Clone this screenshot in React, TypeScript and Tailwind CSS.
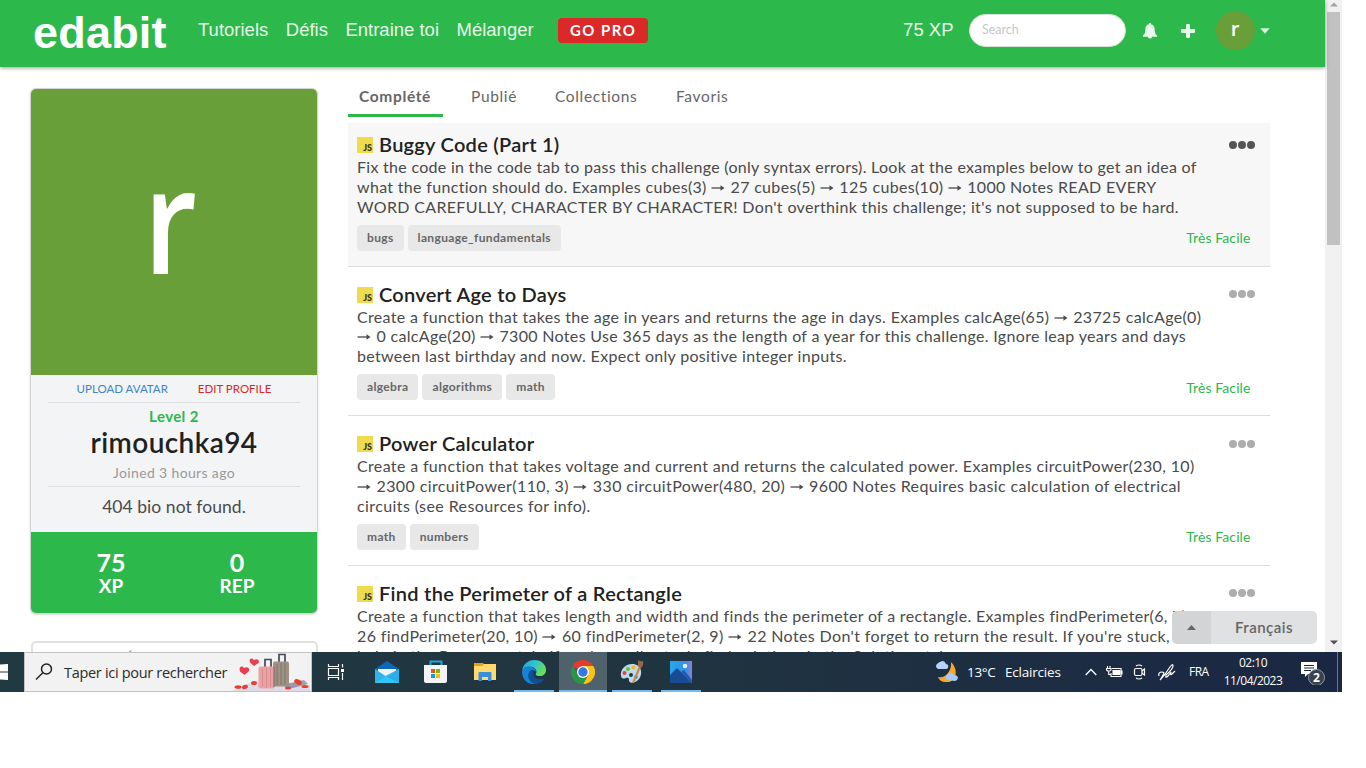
import React from "react";

const challenges = [
  {
    title: "Buggy Code (Part 1)",
    lines: [
      { track: "tracking-[0.285px]", text: "Fix the code in the code tab to pass this challenge (only syntax errors). Look at the examples below to get an idea of" },
      { track: "tracking-[0.32px]", text: "what the function should do. Examples cubes(3) ➞ 27 cubes(5) ➞ 125 cubes(10) ➞ 1000 Notes READ EVERY" },
      { track: "tracking-[0.34px]", text: "WORD CAREFULLY, CHARACTER BY CHARACTER! Don't overthink this challenge; it's not supposed to be hard." },
    ],
    tags: ["bugs", "language_fundamentals"],
  },
  {
    title: "Convert Age to Days",
    lines: [
      { track: "tracking-[0.33px]", text: "Create a function that takes the age in years and returns the age in days. Examples calcAge(65) ➞ 23725 calcAge(0)" },
      { track: "tracking-[0.325px]", text: "➞ 0 calcAge(20) ➞ 7300 Notes Use 365 days as the length of a year for this challenge. Ignore leap years and days" },
      { track: "tracking-[0.315px]", text: "between last birthday and now. Expect only positive integer inputs." },
    ],
    tags: ["algebra", "algorithms", "math"],
  },
  {
    title: "Power Calculator",
    lines: [
      { track: "tracking-[0.352px]", text: "Create a function that takes voltage and current and returns the calculated power. Examples circuitPower(230, 10)" },
      { track: "tracking-[0.39px]", text: "➞ 2300 circuitPower(110, 3) ➞ 330 circuitPower(480, 20) ➞ 9600 Notes Requires basic calculation of electrical" },
      { track: "tracking-[0.4px]", text: "circuits (see Resources for info)." },
    ],
    tags: ["math", "numbers"],
  },
  {
    title: "Find the Perimeter of a Rectangle",
    lines: [
      { track: "tracking-[0.32px]", text: "Create a function that takes length and width and finds the perimeter of a rectangle. Examples findPerimeter(6, 7) ➞" },
      { track: "tracking-[0.37px]", text: "26 findPerimeter(20, 10) ➞ 60 findPerimeter(2, 9) ➞ 22 Notes Don't forget to return the result. If you're stuck," },
      { track: "tracking-[0.3px]", text: "help in the Resources tab. If you're really stuck, find solutions in the Solutions tab." },
    ],
    tags: [],
  },
];

function Arrow() {
  return (
    <svg viewBox="0 0 14 8" className="mr-px inline-block h-2 w-3.5 align-[1px]" fill="none" stroke="#4a4a4a" strokeWidth="1.3">
      <path d="M.5 4H12" />
      <path d="M9.500 1.200 13.500 4 9.500 6.800Z" fill="#4a4a4a" stroke="none" />
    </svg>
  );
}

function Line({ text, track }: { text: string; track: string }) {
  return (
    <div className={`h-[19.9px] whitespace-pre ${track}`}>
      {text.split("➞").map((part, i) => (
        <React.Fragment key={i}>
          {i > 0 && <Arrow />}
          {part}
        </React.Fragment>
      ))}
    </div>
  );
}

function Header() {
  return (
    <header className="relative flex h-[67px] shrink-0 items-center bg-[#2db84b] pl-[33px] pr-[55px] font-['Liberation_Sans',sans-serif] text-lg text-white shadow-[0_1px_4px_rgba(0,0,0,0.4)]">
      <div className="w-[165px] pb-0.5 text-[45px] leading-[60px] font-bold tracking-[0.2px]">edabit</div>
      <nav className="flex h-6 items-center gap-[17.5px] pb-1.5 text-[18.5px] text-[#e6f7e9]">
        <span>Tutoriels</span>
        <span>Défis</span>
        <span>Entraine toi</span>
        <span>Mélanger</span>
      </nav>
      <div className="mb-1.5 ml-6 flex h-[25px] w-[90px] items-center justify-center rounded bg-[#db2828] pl-px font-[Lato,sans-serif] text-[15px] font-bold tracking-[1.5px]">
        GO PRO
      </div>
      <div className="ml-auto flex h-10 items-center pb-1.5">
        <span className="text-[18.5px] text-[#e6f7e9]">75 XP</span>
        <div className="ml-[15.5px] flex h-[33px] w-[157px] items-center rounded-full border border-[#d9e3da] bg-white px-3 pb-0.5 font-[Lato,sans-serif] text-[12.5px] text-[#c7c7c7]">
          Search
        </div>
        <svg viewBox="0 0 14 16" className="ml-[17px] h-4 w-3.5" fill="#e9f8ec">
          <path d="M7 0a1.1 1.1 0 0 0-1.1 1.2C3.2 1.8 2.3 4 2.3 6.4c0 3.2-.8 4.7-2.3 5.900V13.700H5a2 1.900 0 0 0 4 0h5V12.300c-1.500-1.200-2.300-2.700-2.300-5.900C11.700 4 10.800 1.800 8.100 1.200A1.100 1.100 0 0 0 7 0Z" />
        </svg>
        <svg viewBox="0 0 14 14" className="ml-6 h-3.5 w-3.5" fill="#e9f8ec">
          <path d="M6 0h2q1 0 1 1v4h4q1 0 1 1v2q0 1-1 1H9v4q0 1-1 1H6q-1 0-1-1V9H1Q0 9 0 8V6q0-1 1-1h4V1q0-1 1-1Z" />
        </svg>
        <div className="ml-[21px] flex h-[39px] w-[39px] items-center justify-center rounded-full bg-[#689f38] pr-px pb-[3px] font-['Open_Sans',sans-serif] text-[20px] leading-none font-semibold">
          r
        </div>
        <svg viewBox="0 0 10 6" className="ml-[5px] h-1.5 w-2.5" fill="#d9f1de">
          <path d="M.3.2h9.4L5 5.800Z" />
        </svg>
      </div>
    </header>
  );
}

function Profile() {
  return (
    <section className="h-[524px] w-[286px] shrink-0 overflow-hidden rounded-[5px] bg-[#f3f4f6] text-center shadow-[0_0_0_1px_#d4d4d5,0_1px_3px_rgba(0,0,0,0.3)]">
      <svg viewBox="0 0 286 286" className="block h-[286px] w-[286px] bg-[#689f38]">
        <text transform="translate(112.5 185) scale(.85 1)" fill="#fff" fontFamily="Open Sans" fontSize="146" fontWeight="600">r</text>
      </svg>
      <div className="mx-[17px] flex h-7 items-center justify-center gap-[30px] border-b border-[#dedede] text-[11.5px] leading-none text-[#db2828]">
        <span className="text-[#4183c4]">UPLOAD AVATAR</span>
        <span>EDIT PROFILE</span>
      </div>
      <div className="mx-[17px] h-[84px] border-b border-[#dedede] pt-[3px]">
        <div className="text-[15px] leading-5 font-bold tracking-[0.4px] text-[#2db84b]">Level 2</div>
        <div className="text-[28px] leading-8 font-semibold tracking-[0.4px] text-[#212121]">rimouchka94</div>
        <div className="pt-[5px] text-[14px] leading-5 tracking-[0.35px] text-[#999]">Joined 3 hours ago</div>
      </div>
      <div className="h-[45px] text-[17.5px] leading-[40px] tracking-[0.05px] text-[#4a4a4a]">404 bio not found.</div>
      <div className="flex h-[81px] justify-center bg-[#2db84b] pt-[17px] font-bold text-white">
        <div className="w-[126px]">
          <div className="text-[25px] leading-[27px]">75</div>
          <div className="text-[19px] leading-5">XP</div>
        </div>
        <div className="w-[126px]">
          <div className="text-[25px] leading-[27px]">0</div>
          <div className="text-[19px] leading-5">REP</div>
        </div>
      </div>
    </section>
  );
}

function Challenge({ item, active }: { item: (typeof challenges)[number]; active: boolean }) {
  return (
    <article className="h-[149.6px] shrink-0 text-[#4a4a4a]">
      <div className={`h-[143.5px] border-b border-[#ddd] pl-[9px] pt-2 pr-[15px] ${active ? "bg-[#f7f7f7]" : ""}`}>
        <div className="flex h-[26px] items-start">
          <div className="mt-1.5 flex h-4 w-4 items-end justify-end bg-[#f0db4f] pr-px text-[9px] leading-[11px] font-black text-[#323330]">JS</div>
          <h2 className="mt-px ml-1.5 text-[20px] leading-6 font-semibold tracking-[0.27px] whitespace-nowrap text-[#212121]">{item.title}</h2>
          <div className={`mt-[9.5px] ml-auto flex gap-px ${active ? "text-[#555]" : "text-[#adadad]"}`}>
            <i className="size-2 rounded-full bg-current" />
            <i className="size-2 rounded-full bg-current" />
            <i className="size-2 rounded-full bg-current" />
          </div>
        </div>
        <div className="text-[16px] leading-[20px]">
          {item.lines.map((l) => (
            <Line key={l.text} text={l.text} track={l.track} />
          ))}
        </div>
        {item.tags.length > 0 && (
          <div className="mt-2 flex h-[26px] items-center gap-1">
            {item.tags.map((t) => (
              <span key={t} className="h-[26px] rounded bg-[#e8e8e8] px-2.5 text-[12px] leading-[26px] font-bold tracking-[0.35px] text-[#666]">
                {t}
              </span>
            ))}
            <span className="ml-auto pr-[4.5px] text-[14px] tracking-[0.1px] text-[#2db84b]">Très Facile</span>
          </div>
        )}
      </div>
    </article>
  );
}

function Tabs() {
  return (
    <div className="flex h-9 text-[15.5px] leading-[30px] tracking-[0.65px] text-[#666]">
      <div className="w-[95px] border-b-[3px] border-[#2db84b] pl-[11px] font-bold">Complété</div>
      <div className="w-[84px] pl-7">Publié</div>
      <div className="w-[121px] pl-7">Collections</div>
      <div className="pl-7">Favoris</div>
    </div>
  );
}

function Suitcases() {
  return (
    <svg viewBox="0 0 80 38" className="-ml-0.5 h-[38px] w-20 shrink-0">
      <path d="M0 38Q20 25 45 28T78 32V38Z" fill="#dddbea" />
      <path d="M50 32 72 27 76 31 57 36Z" fill="#77758a" opacity=".65" />
      <path d="M47 12V1.500h6V12M33 17V6.500h6V15" fill="none" stroke="#46475c" strokeWidth="1.700" />
      <rect x="41" y="8.500" width="16" height="25" rx="2" fill="#9e9284" />
      <path d="M45 11v21M49 10v22M53 10v22" stroke="#82776c" />
      <rect x="26.500" y="13.500" width="16" height="22" rx="2" fill="#eaa3a3" />
      <path d="M30.500 16v18M34.500 15v20M38.500 15v19" stroke="#d98b91" />
      <path d="M42 14v20" stroke="#6e596b" />
      <path d="M12.500 22 8 18.500C6.500 14 9.500 12 12 15c3-2 6 0 5 3ZM22 13 18 9.500c-1.500-4 2-5.500 4-2.500 3-2 6 0 4.500 3Z" fill="#e93f50" />
      <g fill="#e93f2c">
        <ellipse cx="6" cy="34" rx="3.500" ry="1.800" /><ellipse cx="13" cy="34" rx="3" ry="2" transform="rotate(-20 13 34)" />
        <ellipse cx="22" cy="30" rx="3" ry="2" /><ellipse cx="66" cy="29" rx="4" ry="2.400" transform="rotate(25 66 29)" />
        <ellipse cx="73" cy="33.500" rx="3.500" ry="1.600" /><ellipse cx="56" cy="35" rx="3" ry="1.500" />
      </g>
    </svg>
  );
}

function Running({ active, wide, children }: { active?: boolean; wide: string; children: React.ReactNode }) {
  return (
    <div className={`flex h-10 items-center justify-center border-b-2 border-[#76b9ed] pt-0.5 ${wide} ${active ? "bg-[#4f626b]" : ""}`}>
      {children}
    </div>
  );
}

function Taskbar() {
  return (
    <footer className="flex h-10 shrink-0 items-center bg-linear-to-r from-[#213a42] via-[#203440] via-50% to-[#1a2743] font-['Open_Sans',sans-serif] text-white">
      <svg viewBox="0 0 24 40" className="h-10 w-6 shrink-0" fill="#fff">
        <path d="M0 12.500 8 12v7.500H0ZM0 20.500h8V28l-8-.6Z" />
      </svg>
      <div className="flex h-10 w-72 shrink-0 items-center overflow-hidden border border-[#c3c3c3] bg-[#f2f2f2] text-[14.5px] tracking-[-0.31px] text-[#2b2b2b]">
        <svg viewBox="0 0 18 18" className="ml-[10px] h-[18px] w-[18px] shrink-0" fill="none" stroke="#222" strokeWidth="1.500">
          <circle cx="11.500" cy="6" r="5" /><path d="m8 9.500-7 7" />
        </svg>
        <span className="ml-[11px] w-[170px] shrink-0 pt-0.5 whitespace-nowrap">Taper ici pour rechercher</span>
        <Suitcases />
      </div>
      <svg viewBox="0 0 18 18" className="ml-[15px] h-[18px] w-[18px] shrink-0" fill="none" stroke="#fff" strokeWidth="1.200">
        <path d="M1.500 1v2.500h10V1M1.500 17v-2.500h10V17M1.500 5.500h10v7h-10ZM15.500 1v3.500M15.500 10v7" /><path d="M14 6h3v3h-3Z" fill="#fff" stroke="none" />
      </svg>
      <svg viewBox="0 0 24 24" className="ml-[30px] h-6 w-6 shrink-0">
        <path d="M0 9 12 1l12 8v5H0Z" fill="#0969b8" /><path d="M3 9h18v7H3Z" fill="#f3f3f3" /><path d="M0 9v14h24V9L12 17Z" fill="#2fb4ee" /><path d="m0 23 12-8 12-6v14Z" fill="#35c4f5" /><path d="M10 15.700 24 23V9L12 17Z" fill="#1c97de" opacity=".5" />
      </svg>
      <svg viewBox="0 0 24 24" className="ml-[25px] h-6 w-6 shrink-0">
        <path d="M6.500 7V1.500h11V7" fill="none" stroke="#20a4e4" strokeWidth="2" /><path d="M0 5h23v16q0 2-2 2H2q-2 0-2-2Z" fill="#f4f4f4" />
        <path d="M7 9h4v4H7Z" fill="#f25022" /><path d="M12 9h4v4h-4Z" fill="#7fba00" /><path d="M7 14h4v4H7Z" fill="#00a4ef" /><path d="M12 14h4v4h-4Z" fill="#ffb900" />
      </svg>
      <svg viewBox="0 0 22 20" className="ml-[26px] h-5 w-[22px] shrink-0">
        <path d="M0 1h9l2 2h11v15H0Z" fill="#e2a30e" /><path d="M0 4h8l2-2h12v16H0Z" fill="#ffda70" /><path d="M4.500 19v-8q0-1 1-1h11q1 0 1 1v8h-3.500v-4H8v4Z" fill="#3b8ed8" />
      </svg>
      <div className="ml-[18px] flex gap-[5px]">
        <Running wide="w-10">
          <svg viewBox="0 0 24 24" className="size-6">
            <defs>
              <linearGradient id="edgeTop" x1="0" x2="1" y1="0" y2=".4"><stop stopColor="#249fe6" /><stop offset=".55" stopColor="#30c5cf" /><stop offset="1" stopColor="#66e05a" /></linearGradient>
            </defs>
            <path d="M0 11C1 4 6 0 12 0c8 0 12 5 12 10 0 4-3 6-6 6-3 0-4.500-1-4.500-1.800 2-2 1-6-3.500-7.200C6 6 1 7 0 11Z" fill="url(#edgeTop)" />
            <path d="M0 12C0 8 4 6 8 6.500c4 .5 6 3 6 5.500-1-2-5-2.500-6.500 1C6 17 9 22 14 23.800 6 25.500 0 19 0 12Z" fill="#1683d5" />
            <path d="M8.500 10.500c-4 3-3 12 5 13.500 4 0 8-3 9.300-5.800-5 2.300-10.300.8-11.300-3.200-.5-2 .2-3.500 1-4.500-1.500-1-3-.7-4 0Z" fill="#104f97" />
          </svg>
        </Running>
        <Running wide="w-12" active>
          <svg viewBox="0 0 24 24" className="size-6">
            <path d="M12 12 1.600 6A12 12 0 0 1 22.400 6Z" fill="#e33b2e" /><path d="M12 12V6h10.400A12 12 0 0 1 12 24l5.200-9Z" fill="#fbc116" />
            <path d="M12 24A12 12 0 0 1 1.600 6l5.200 9 5.200 2 5.200-2Z" fill="#279847" /><circle cx="12" cy="12" r="6" fill="#fff" /><circle cx="12" cy="12" r="4.700" fill="#3478e5" />
          </svg>
        </Running>
        <Running wide="w-10">
          <svg viewBox="0 0 24 24" className="size-6">
            <path d="M12 4C5 4 0 10 1 16c.5 3 3 3 5 2 3-1 3 1 3 3 1 3 7 2 10-2 4-5 3-15-7-15Z" fill="#b8dbed" /><circle cx="11" cy="15" r="2" fill="#253947" />
            <circle cx="4.500" cy="13" r="2" fill="#e5433e" /><circle cx="8" cy="9" r="2" fill="#6dbd36" /><circle cx="13.500" cy="7.500" r="2" fill="#f1b432" /><circle cx="16" cy="17" r="1.800" fill="#4185d7" />
            <path d="M12 23 19 6l2 1-7 16Z" fill="#d58236" /><path d="M18 0q3 2 5 1 1 4-2 7l-3-2Z" fill="#9b6547" />
          </svg>
        </Running>
        <Running wide="ml-1 w-10">
          <svg viewBox="0 0 22 22" className="size-[22px]">
            <defs><linearGradient id="photo" x2="1"><stop stopColor="#25a8e8" /><stop offset=".7" stopColor="#3390e6" /><stop offset="1" stopColor="#8e7edb" /></linearGradient></defs>
            <path d="M0 0h22v22H0Z" fill="url(#photo)" /><path d="m0 14 7-7 15 15H0Z" fill="#174b94" /><path d="m11 11 3-2 8 10v3Z" fill="#235cab" /><circle cx="15" cy="5" r="2.200" fill="#e8f4ff" />
          </svg>
        </Running>
      </div>
      <svg viewBox="0 0 24 24" className="ml-auto h-6 w-6 shrink-0">
        <path d="M17 2c9 9 4 21-5 20-4 0-7-2-8-5 7 2 14-6 13-15Z" fill="#f9a72b" /><path d="M4 9a3 3 0 0 1-1-5Q5 2 6 2q4-3 6 2c3 0 3 5 0 5Z" fill="#b7d2fb" /><path d="M13 20a3 3 0 0 1 0-5q3-5 7 0c5 0 5 5 1 6Z" fill="#a8c8f7" />
      </svg>
      <span className="ml-[9px] w-[38px] text-[13.5px] tracking-[-0.3px]">13°C</span>
      <span className="w-[80px] text-[13.5px] tracking-[-0.2px]">Eclaircies</span>
      <svg viewBox="0 0 12 8" className="h-2 w-3 shrink-0" fill="none" stroke="#fff" strokeWidth="1.300"><path d="m.7 7 5.300-5.500L11.300 7" /></svg>
      <svg viewBox="0 0 17 12" className="ml-[9px] h-3 w-[17px] shrink-0" fill="none" stroke="#fff" strokeWidth="1.100">
        <path d="M6 2.500h9v8H5V7" /><path d="M7 4.500h6.500v4H7ZM15 5h1v3h-1Z" fill="#fff" /><path d="M1.500 0v2M4 0v2M.5 2.500h4.500V4q-2 2.500-4.500 0ZM2.700 5v3.500H5" />
      </svg>
      <svg viewBox="0 0 14 16" className="ml-[10px] h-4 w-3.5 shrink-0" fill="none" stroke="#fff" strokeWidth="1.200">
        <rect x="1.500" y="4.500" width="7.500" height="7" rx="1.500" /><path d="m9 7 2.500-2v6L9 9M3 2Q6 0 9 2M3 14q3 2 6 0" />
      </svg>
      <svg viewBox="0 0 18 18" className="ml-[11px] h-[18px] w-[18px] shrink-0" fill="none" stroke="#fff" strokeWidth="1.200">
        <path d="M1 13q-1-4 3-4 3 0 1 3-2 4-3 5Q7 12 12 4q3-4 3-1 0 3-7 9-1 4 2 1l3-4q-1 4 1 2l3-3" />
      </svg>
      <span className="ml-[13px] w-[25px] text-[12px] tracking-[-0.5px]">FRA</span>
      <div className="ml-[7px] w-[64px] text-center text-[12px] leading-[18px] tracking-[-0.5px] whitespace-nowrap">
        <div>02:10</div>
        <div>11/04/2023</div>
      </div>
      <svg viewBox="0 0 26 26" className="ml-[15px] h-[26px] w-[26px] shrink-0">
        <path d="M1 3h16v12H8l-3 3v-3H1Z" fill="#fff" /><path d="M4 6.500h10M4 9h10M4 11.500h7" stroke="#1a2743" />
        <circle cx="16.500" cy="18.500" r="8" fill="#39424f" stroke="#8c95a0" /><text x="16.500" y="22.700" textAnchor="middle" fill="#fff" fontSize="12" fontWeight="700">2</text>
      </svg>
      <div className="ml-[11px] h-10 w-px bg-[#6b7385]" />
      <div className="w-1" />
    </footer>
  );
}

export default function App() {
  return (
    <div className="h-[768px] w-[1366px] overflow-hidden bg-white">
      <div className="flex h-[692px] w-[1342px] flex-col font-[Lato,sans-serif]">
        <div className="relative flex h-[652px] shrink-0 overflow-hidden">
          <div className="w-[1325px]">
            <Header />
            <main className="flex pl-[31px]">
              <div className="w-[317px] shrink-0 pt-[22px]">
                <Profile />
                <div className="mt-7 flex h-20 w-[287px] justify-between rounded-[5px] border-2 border-[#e0e1e2] px-0.5 pt-[5px] text-[15px] text-[#999]">
                  <span>Langage</span><span>Éditeur</span><span>Musique</span><span>Ici</span>
                </div>
              </div>
              <div className="w-[922px] shrink-0 pt-[14px]">
                <Tabs />
                <div className="pt-[6px]">
                  {challenges.map((c, i) => (
                    <Challenge key={c.title} item={c} active={i === 0} />
                  ))}
                </div>
              </div>
            </main>
          </div>
          <div className="flex w-[17px] flex-col items-center justify-between bg-[#f1f1f1]">
            <svg viewBox="0 0 8 5" className="mt-0.5 h-[5px] w-2" fill="#a3a3a3"><path d="m0 4.500 4-4 4 4Z" /></svg>
            <div className="mt-[5px] h-[233px] w-[13px] bg-[#c1c1c1]" />
            <svg viewBox="0 0 8 5" className="mt-auto mb-[7px] h-[5px] w-2" fill="#505050"><path d="m0 .5 4 4 4-4Z" /></svg>
          </div>
          <div className="absolute right-[25px] bottom-2 flex h-[33px] w-[145px] overflow-hidden rounded-[5px] bg-[#e0e1e2]">
            <div className="flex w-[39px] items-center justify-center bg-[#d3d4d5]">
              <svg viewBox="0 0 9 5" className="h-[5px] w-[9px]" fill="#666"><path d="m0 5 4.500-5L9 5Z" /></svg>
            </div>
            <div className="flex-1 text-center text-[15px] leading-[33px] font-semibold tracking-[0.5px] text-[#666]">Français</div>
          </div>
        </div>
        <Taskbar />
      </div>
    </div>
  );
}
